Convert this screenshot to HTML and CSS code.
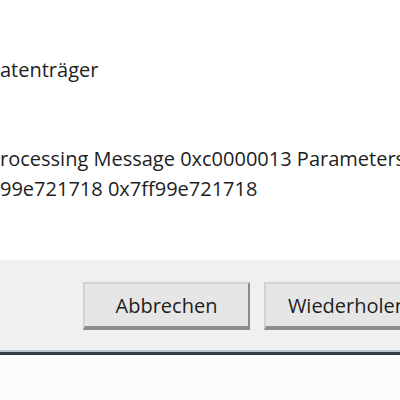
FILE: index.html
```html
<!DOCTYPE html>
<html lang="de">
<head>
    <meta charset="UTF-8">
    <title>Kein Datenträger</title>
    <link rel="stylesheet" href="styles.css">
</head>
<body>
    <div class="dialog">
        <div class="content">
            <div class="title">atenträger</div>
            <div class="message">
                <div class="line">rocessing Message 0xc0000013 Parameters</div>
                <div class="line">99e721718 0x7ff99e721718</div>
            </div>
        </div>

        <div class="footer">
            <button class="btn">Abbrechen</button>
            <button class="btn">Wiederholen</button>
        </div>

        <div class="edge"></div>
        <div class="below"></div>
    </div>
</body>
</html>
```

FILE: styles.css
```css
* {
    margin: 0;
    padding: 0;
    box-sizing: border-box;
}

body {
    font-family: "Open Sans", "Noto Sans", sans-serif;
    background: #ffffff;
    width: 400px;
    height: 400px;
    overflow: hidden;
}

.dialog {
    display: flex;
    flex-direction: column;
    height: 400px;
}

/* Content */
.content {
    height: 260px;
    padding-top: 56px;
    background: #ffffff;
}

.title {
    color: #1e1e1e;
    font-size: 20px;
    line-height: 28px;
    white-space: nowrap;
}

.message {
    margin-top: 60px;
    color: #1e1e1e;
    font-size: 20px;
    line-height: 30px;
}

.line {
    white-space: nowrap;
    overflow: hidden;
}

/* Footer */
.footer {
    height: 90px;
    background: #f0f0f0;
    display: flex;
    align-items: flex-start;
    gap: 14px;
    padding: 22px 0 0 83px;
    overflow: hidden;
}

.btn {
    flex-shrink: 0;
    width: 167px;
    height: 48px;
    font-family: inherit;
    font-size: 20px;
    color: #1e1e1e;
    background: #e6e6e6;
    border: 2px solid #d2d2d2;
    border-right-color: #8a8a8a;
    border-bottom: 4px solid #8c8c8c;
    padding-top: 1px;
}

.edge {
    height: 5px;
    background: linear-gradient(#b9c7cd 0, #b9c7cd 2px, #33404a 2px);
}

.below {
    flex: 1;
    background: #fafcfd;
}
```
